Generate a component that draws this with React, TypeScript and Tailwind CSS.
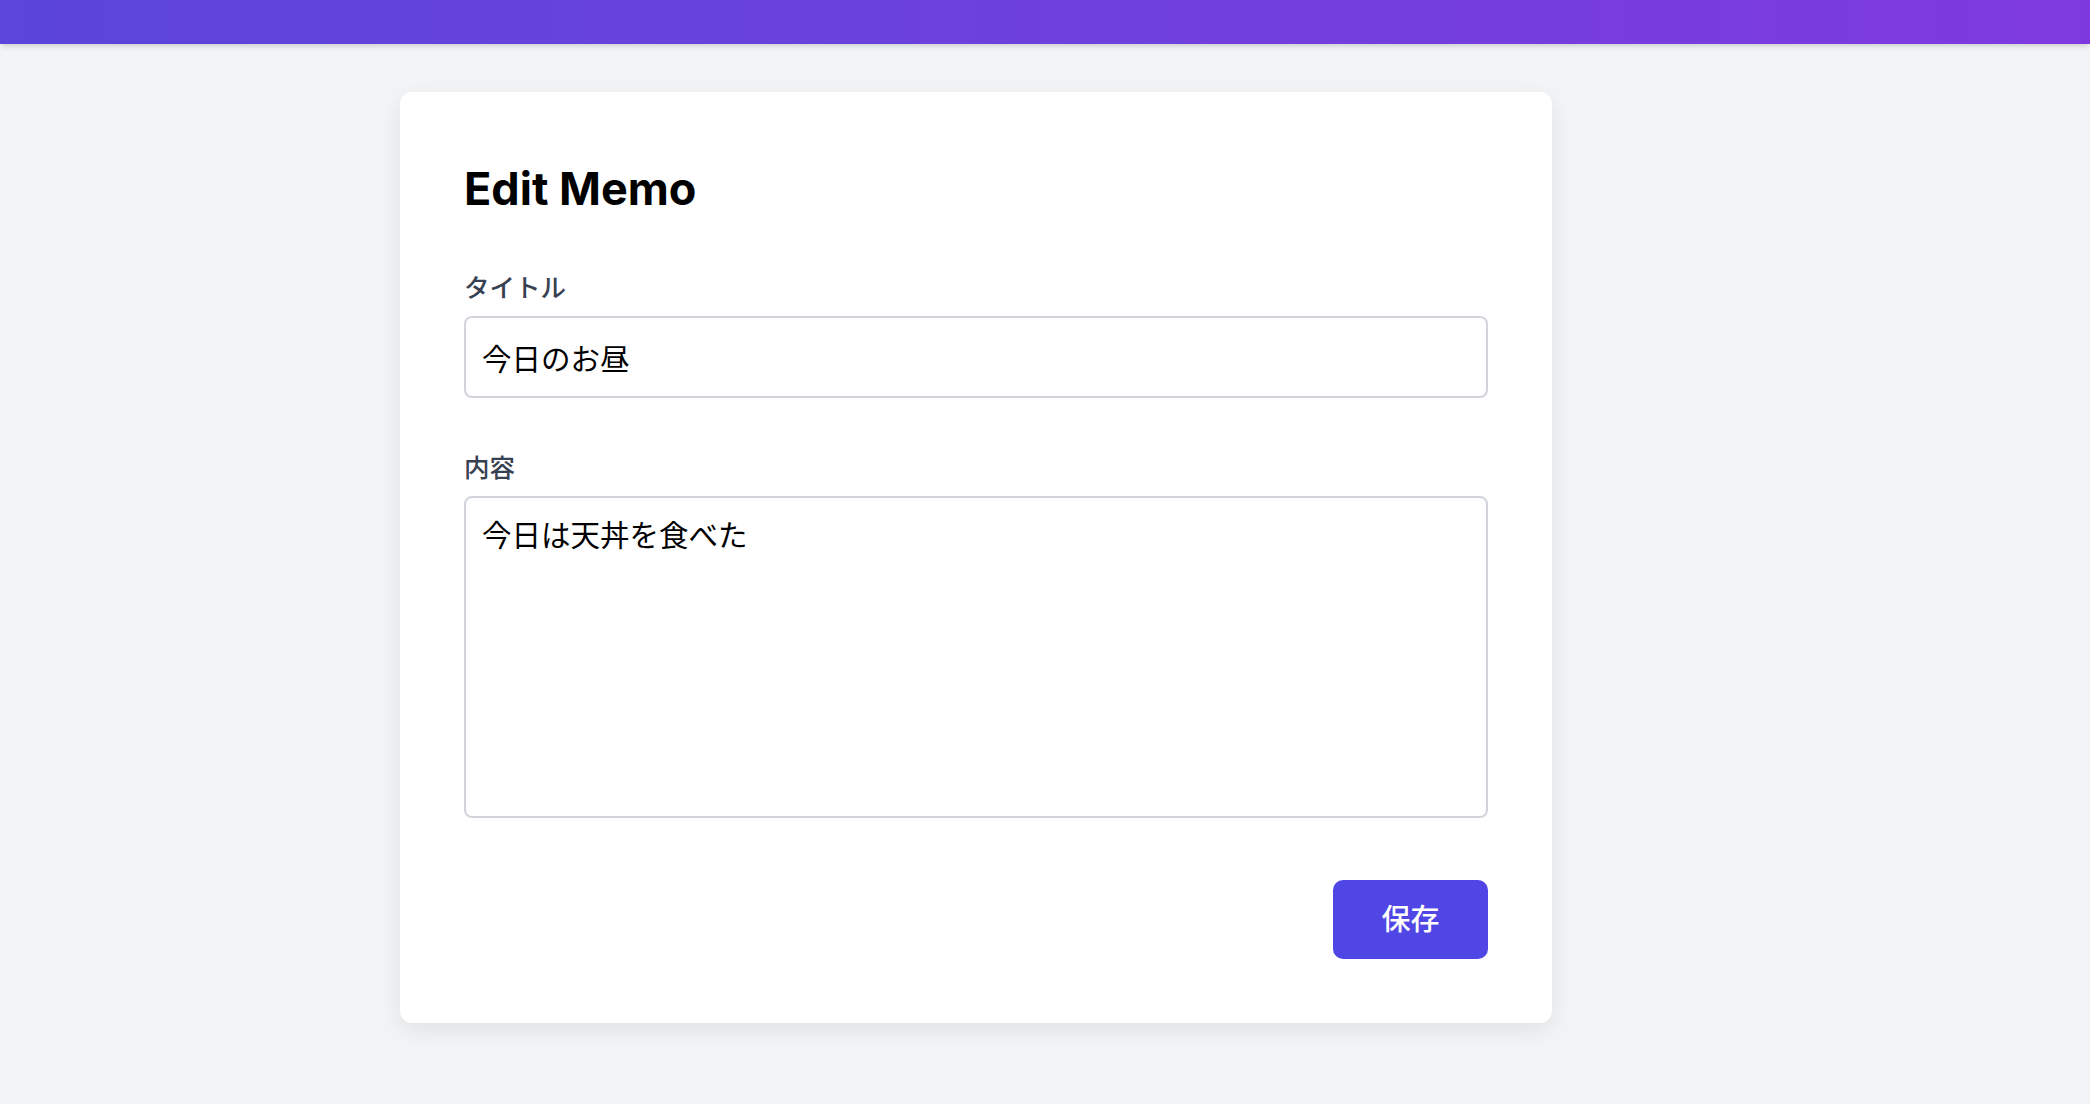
import { useState } from 'react';

const font = { latin: "font-['Inter','Noto_Sans_CJK_JP',sans-serif]" };

export default function App() {
    const [title, setTitle] = useState('今日のお昼');
    const [content, setContent] = useState('今日は天丼を食べた');

    return (
        <div className={`min-h-screen bg-[#f3f4f6] ${font.latin}`}>
            {/* ヘッダー */}
            <header className="h-[44px] bg-gradient-to-r from-[#5b45da] to-[#7f3adf] shadow-md" />

            <main className="pt-12 pl-[400px] pb-12">
                <div className="w-[1152px] bg-white rounded-xl shadow-[0_8px_24px_rgba(0,0,0,0.08)] p-16">
                    <h1 className="text-[45px] leading-[66px] font-bold text-black mb-[48px]">Edit Memo</h1>

                    <div className="mb-[52px]">
                        <label className="block text-[25.5px] leading-[36px] font-medium text-[#374151] mb-[10px]">
                            タイトル
                        </label>
                        <input
                            value={title}
                            onChange={(e) => setTitle(e.target.value)}
                            className="w-full h-[82px] px-4 text-[29.5px] text-black border-2 border-[#d1d5db] rounded-lg outline-none"
                        />
                    </div>

                    <div className="mb-[62px]">
                        <label className="block text-[25.5px] leading-[36px] font-medium text-[#374151] mb-[10px]">
                            内容
                        </label>
                        <textarea
                            value={content}
                            onChange={(e) => setContent(e.target.value)}
                            className="block w-full h-[322px] px-4 py-4 text-[29.5px] leading-[42px] text-black border-2 border-[#d1d5db] rounded-lg outline-none resize-none"
                        />
                    </div>

                    <div className="flex justify-end">
                        <button className="h-[79px] w-[155px] bg-[#4f46e5] text-white text-[29px] font-medium rounded-[10px]">
                            保存
                        </button>
                    </div>
                </div>
            </main>
        </div>
    );
}
